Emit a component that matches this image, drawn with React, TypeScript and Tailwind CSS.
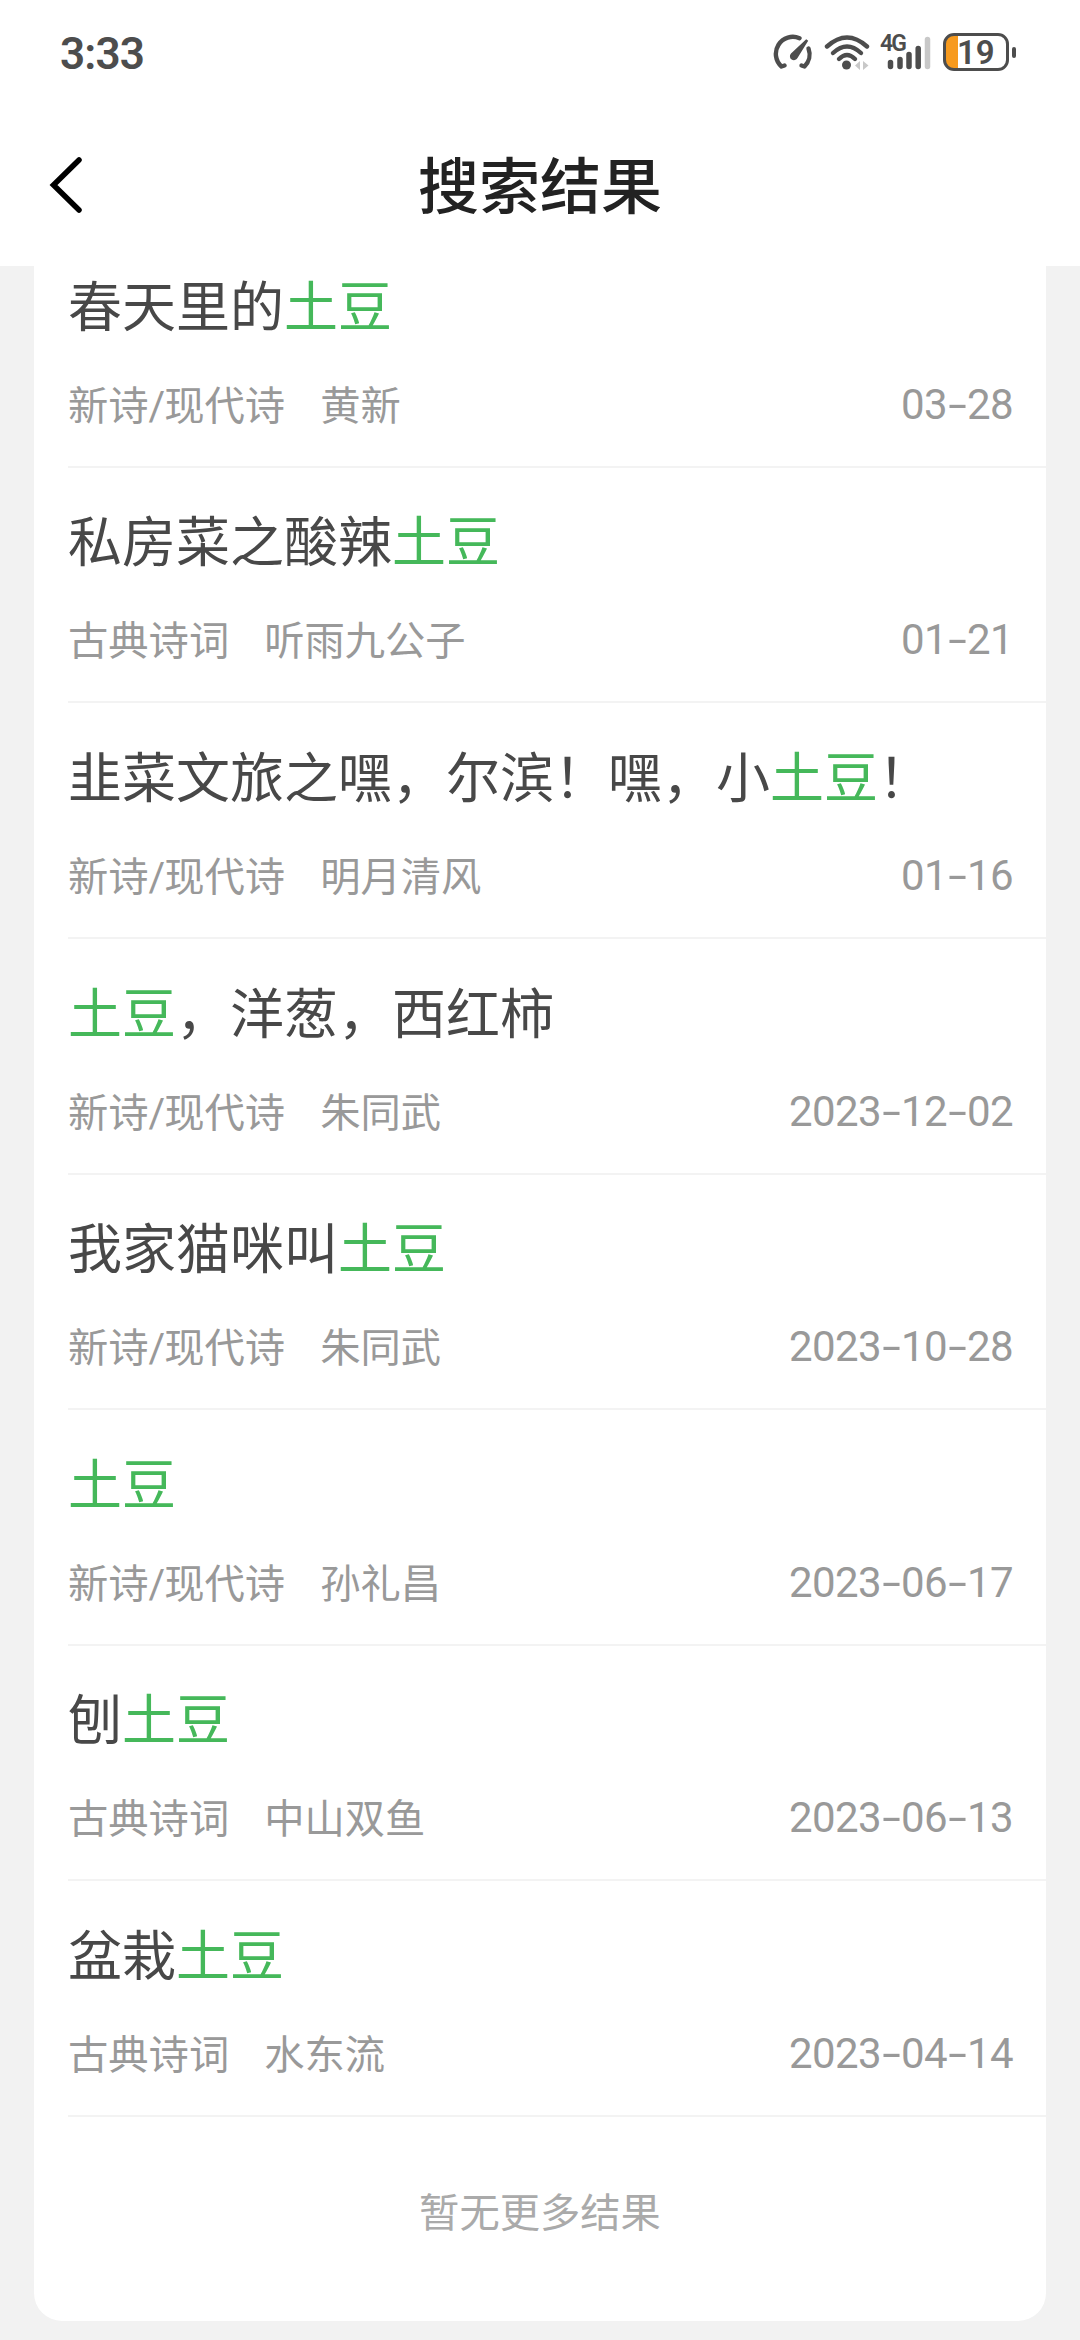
import { Fragment } from "react";

type Poem = {
  title: string;
  category: string;
  author: string;
  date: string;
};

const KEYWORD = "土豆";

const poems: Poem[] = [
  { title: "春天里的土豆", category: "新诗/现代诗", author: "黄新", date: "03-28" },
  { title: "私房菜之酸辣土豆", category: "古典诗词", author: "听雨九公子", date: "01-21" },
  { title: "韭菜文旅之嘿，尔滨！嘿，小土豆！", category: "新诗/现代诗", author: "明月清风", date: "01-16" },
  { title: "土豆，洋葱，西红柿", category: "新诗/现代诗", author: "朱同武", date: "2023-12-02" },
  { title: "我家猫咪叫土豆", category: "新诗/现代诗", author: "朱同武", date: "2023-10-28" },
  { title: "土豆", category: "新诗/现代诗", author: "孙礼昌", date: "2023-06-17" },
  { title: "刨土豆", category: "古典诗词", author: "中山双鱼", date: "2023-06-13" },
  { title: "盆栽土豆", category: "古典诗词", author: "水东流", date: "2023-04-14" }
];

function StatusBar() {
  return (
    <div className="flex h-[104px] items-center justify-between pl-[60px] pr-[64px] text-[#4d4d4d]">
      <span className="pt-[3px] font-['Roboto',sans-serif] text-[44px] leading-none font-semibold tracking-[-0.8px]">3:33</span>
      <div className="flex items-center">
        <svg
          className="mr-[11px] h-[38px] w-[40px]"
          viewBox="0 0 40 38"
          fill="none"
          stroke="currentColor"
          strokeWidth="4.4"
          strokeLinecap="round"
          strokeLinejoin="round">
          <path d="M26.5 5.2A17 17 0 0 0 8.5 33.5L11.5 32.5" />
          <path d="M35.5 15.5A17 17 0 0 1 31.5 33.5L28.5 32.5" />
          <path
            d="M33.2 6.2L35.2 7.8L24.5 25A4 4 0 1 1 18 20.5Z"
            fill="currentColor"
            stroke="none"
          />
        </svg>
        <svg
          className="mr-[10px] h-[38px] w-[46px]"
          viewBox="0 0 46 38"
          fill="none"
          stroke="currentColor"
          strokeWidth="4.4"
          strokeLinecap="round">
          <path d="M3 13.5Q23 -4.5 43 13.5" />
          <path d="M9 20Q23 7 37 20" />
          <path d="M15 26Q23 18 31 26" />
          <circle
            cx="22.5"
            cy="32"
            r="4.5"
            fill="currentColor"
            stroke="none"
          />
          <path
            d="M31 32.5L36 28V37ZM44.5 32.5L39 28V37Z"
            fill="#c8c8c8"
            stroke="none"
          />
        </svg>
        <div className="relative mr-[12px] h-[38px] w-[51px]">
          <span className="absolute -top-px left-0 font-['Roboto',sans-serif] text-[23px] leading-[23px] font-semibold tracking-[-2px]">4G</span>
          <svg
            className="h-[38px] w-[51px]"
            viewBox="0 0 51 38"
            stroke="currentColor"
            strokeWidth="5.5"
            strokeLinecap="round">
            <path d="M10.5 29.5V33.5M20 26.5V33.5M29 21.5V33.5M38.2 15.5V33.5" />
            <path
              d="M47.5 6.5V33.5"
              stroke="#c8c8c8"
            />
          </svg>
        </div>
        <div className="flex h-[38px] w-[66px] items-center overflow-hidden rounded-[11px] border-[3px] border-[#4d4d4d] bg-[linear-gradient(to_right,#f79a1e_12px,#fff_12px)] pl-[11px]">
          <span className="font-['Roboto',sans-serif] text-[33px] leading-none font-semibold">19</span>
        </div>
        <div className="ml-[3px] h-[11px] w-[4px] rounded-sm bg-[#4d4d4d]" />
      </div>
    </div>
  );
}

function NavBar() {
  return (
    <header className="grid h-[162px] grid-cols-[1fr_auto_1fr] items-center">
      <button
        type="button"
        aria-label="返回"
        className="ml-[48px] w-[36px]">
        <svg
          className="h-[60px] w-[36px]"
          viewBox="0 0 36 60"
          fill="none"
          stroke="#000"
          strokeWidth="5.5"
          strokeLinecap="round">
          <path d="M31 5L5.5 30L31 55" />
        </svg>
      </button>
      <h1 className="pb-[4px] text-[61px] leading-[80px] font-medium text-[#222]">搜索结果</h1>
    </header>
  );
}

function HighlightedTitle({ title }: { title: string }) {
  const parts = title.split(KEYWORD);

  return (
    <h2 className="text-[54px] leading-[60px] whitespace-nowrap text-[#484848]">
      {parts.map((part, i) => (
        <Fragment key={i}>
          {i > 0 && <span className="text-[#45b85a]">{KEYWORD}</span>}
          {part}
        </Fragment>
      ))}
    </h2>
  );
}

function PoemCategory({ category }: { category: string }) {
  return (
    <span>
      {category.split("/").map((part, i) => (
        <Fragment key={i}>
          {i > 0 && <span className="font-['Roboto',sans-serif] tracking-[-1px]">/</span>}
          {part}
        </Fragment>
      ))}
    </span>
  );
}

function PoemDate({ date }: { date: string }) {
  return (
    <time className="flex font-['Roboto',sans-serif] text-[42px] leading-[52px] tracking-[-0.6px]">
      {date.split("-").map((part, i) => (
        <Fragment key={i}>
          {i > 0 && <span className="w-[20px] scale-x-160 text-center">-</span>}
          <span>{part}</span>
        </Fragment>
      ))}
    </time>
  );
}

function PoemRow({ poem }: { poem: Poem }) {
  return (
    <li className="ml-[34px] flex h-[235.6px] flex-col justify-end border-b-2 border-[#f3f3f3] pr-[33px] pb-[35px]">
      <HighlightedTitle title={poem.title} />
      <div className="mt-[45px] flex items-start justify-between text-[40.3px] leading-[48px] text-[#999]">
        <div className="flex gap-[35px]">
          <PoemCategory category={poem.category} />
          <span>{poem.author}</span>
        </div>
        <PoemDate date={poem.date} />
      </div>
    </li>
  );
}

export default function App() {
  return (
    <div className="flex h-[2340px] w-[1080px] flex-col overflow-hidden bg-white font-['Noto_Sans_CJK_SC',sans-serif]">
      <StatusBar />
      <NavBar />
      <main className="flex flex-1 flex-col justify-end overflow-hidden bg-[#f2f2f2] px-[34px] pb-[19px]">
        <div className="rounded-b-[28px] bg-white">
          <ul>
            {poems.map((poem) => (
              <PoemRow
                key={poem.title}
                poem={poem}
              />
            ))}
          </ul>
          <p className="flex h-[204px] items-center justify-center pb-[18px] text-[40.3px] text-[#aaa]">暂无更多结果</p>
        </div>
      </main>
    </div>
  );
}
